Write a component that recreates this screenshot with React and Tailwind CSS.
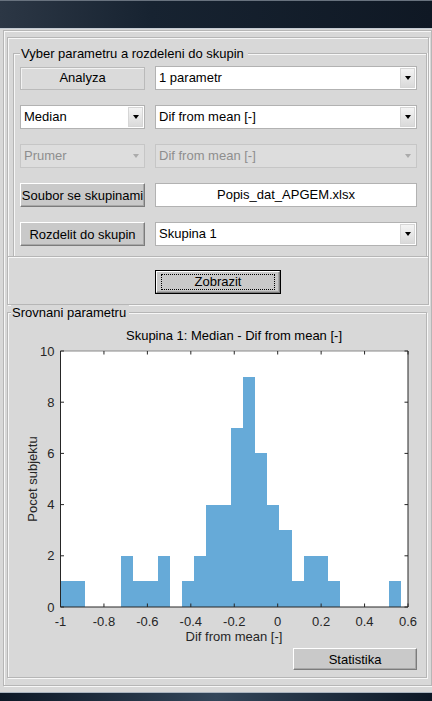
import React from 'react';

const bins = [1, 1, 0, 0, 0, 2, 1, 1, 2, 0, 1, 2, 4, 4, 7, 9, 6, 4, 3, 1, 2, 2, 1, 0, 0, 0, 0, 1];
const binWidth = 0.056;

// axes box in page pixels
const AX = { l: 60.5, r: 408, t: 351, b: 607 };
const xs = (v) => AX.l + ((v + 1) * (AX.r - AX.l)) / 1.6;
const ys = (c) => AX.b - (c * (AX.b - AX.t)) / 10;

const xTicks = [-1, -0.8, -0.6, -0.4, -0.2, 0, 0.2, 0.4, 0.6];
const yTicks = [0, 2, 4, 6, 8, 10];
const FONT = 'Liberation Sans, Arial, sans-serif';

function Select({ value, disabled }) {
    return (
        <div
            className={`flex h-[24px] flex-1 items-stretch border ${disabled
                ? 'border-[#c6c6c6] bg-[#dddddd] text-[#8e8e8e]'
                : 'border-[#b2b2b2] bg-white text-black'
                }`}
        >
            <div className="flex-1 truncate pl-[3px] leading-[22px]">{value}</div>
            <div
                className={`m-[1px] flex w-[15px] items-center justify-center border ${disabled
                    ? 'border-[#dddddd] bg-[#dddddd]'
                    : 'border-[#d6d6d6] bg-[linear-gradient(#f4f4f4,#dadada)]'
                    }`}
            >
                <span
                    className={`border-x-[3px] border-t-[4px] border-x-transparent ${disabled ? 'border-t-[#ababab]' : 'border-t-black'
                        }`}
                />
            </div>
        </div>
    );
}

function Button3D({ children, className = '' }) {
    return (
        <div
            className={`flex items-center justify-center border border-t-white border-l-white border-r-[#7c7c7c] border-b-[#7c7c7c] bg-[#c9c9c9] leading-none shadow-[inset_-1px_-1px_0_#a8a8a8] ${className}`}
        >
            {children}
        </div>
    );
}

function Histogram() {
    return (
        <svg width="418" height="325" className="block" fontFamily={FONT}>
            <g transform="translate(-8 -320)">
                <rect x={AX.l} y={AX.t} width={AX.r - AX.l} height={AX.b - AX.t} fill="#ffffff" />
                {bins.map((c, i) => {
                    if (!c) return null;
                    const x0 = xs(-1 + i * binWidth);
                    const x1 = xs(-1 + (i + 1) * binWidth);
                    return (
                        <rect
                            key={i}
                            x={x0}
                            y={ys(c)}
                            width={x1 - x0}
                            height={AX.b - ys(c)}
                            fill="#66aad8"
                            shapeRendering="crispEdges"
                        />
                    );
                })}

                {/* box */}
                <line x1={AX.l} y1={AX.t} x2={AX.r} y2={AX.t} stroke="#8a8a8a" strokeWidth="1" />
                <line x1={AX.l} y1={AX.b} x2={AX.r} y2={AX.b} stroke="#262626" strokeWidth="1" />
                <line x1={AX.l} y1={AX.t} x2={AX.l} y2={AX.b} stroke="#262626" strokeWidth="1" />
                <line x1={AX.r} y1={AX.t} x2={AX.r} y2={AX.b} stroke="#262626" strokeWidth="1" />

                {xTicks.map((v) => (
                    <g key={v}>
                        <line x1={xs(v)} y1={AX.b} x2={xs(v)} y2={AX.b - 3.5} stroke="#262626" />
                        <line x1={xs(v)} y1={AX.t} x2={xs(v)} y2={AX.t + 3.5} stroke="#262626" />
                        <text x={xs(v)} y={625.5} fontSize="13" fill="#262626" textAnchor="middle">
                            {v}
                        </text>
                    </g>
                ))}
                {yTicks.map((c) => (
                    <g key={c}>
                        <line x1={AX.l} y1={ys(c)} x2={AX.l + 3.5} y2={ys(c)} stroke="#262626" />
                        <line x1={AX.r} y1={ys(c)} x2={AX.r - 3.5} y2={ys(c)} stroke="#262626" />
                        <text x={54.5} y={ys(c) + 4.5} fontSize="13" fill="#262626" textAnchor="end">
                            {c}
                        </text>
                    </g>
                ))}

                <text x={234} y={339.5} fontSize="13" fill="#000000" textAnchor="middle">
                    Skupina 1: Median - Dif from mean [-]
                </text>
                <text x={234} y={641} fontSize="13" fill="#262626" textAnchor="middle">
                    Dif from mean [-]
                </text>
                <text
                    x={32}
                    y={479}
                    fontSize="13"
                    fill="#262626"
                    textAnchor="middle"
                    dominantBaseline="central"
                    transform="rotate(-90 32 479)"
                >
                    Pocet subjektu
                </text>
            </g>
        </svg>
    );
}

export default function App() {
    return (
        <div className="flex h-[701px] w-[432px] flex-col overflow-hidden bg-[#d8d8d8] font-['Liberation_Sans',Arial,sans-serif] text-[13px] text-black">
            {/* window title bar */}
            <div className="h-[29px] shrink-0 border-t border-b border-t-[#68727e] border-b-[#c3cad2] bg-[linear-gradient(90deg,#2c3745,#172331_35%,#0f1824)]" />

            <div className="flex-1">
                <div className="ml-[3px] mt-[1px] flex h-[656px] w-[429px] flex-col border border-[#b6b6b6] shadow-[1px_1px_0_#f7f7f7,inset_1px_1px_0_#f7f7f7]">
                    {/* parameter selection */}
                    <div className="ml-[3px] mt-[6px] w-[422px] border border-[#b6b6b6] shadow-[1px_1px_0_#f7f7f7,inset_1px_1px_0_#f7f7f7]">
                        <fieldset className="ml-[5px] mt-[8px] w-[414px] border border-b-0 border-[#b6b6b6] pb-[10px] pl-[6px] pr-[9px] pt-[5px] shadow-[1px_0_0_#f7f7f7,inset_1px_1px_0_#f7f7f7]">
                            <legend className="bg-[#d8d8d8] pl-[1px] pr-[4px] leading-[15px]">
                                Vyber parametru a rozdeleni do skupin
                            </legend>
                            <div className="flex flex-col gap-[15px]">
                                <div className="flex h-[24px] items-center gap-[10px]">
                                    <div className="flex h-[23px] w-[125px] items-center justify-center border border-[#bababa] bg-[#dadada] shadow-[inset_1px_1px_0_#f2f2f2]">
                                        Analyza
                                    </div>
                                    <Select value="1 parametr" />
                                </div>
                                <div className="flex h-[24px] items-center gap-[10px]">
                                    <div className="flex w-[125px]">
                                        <Select value="Median" />
                                    </div>
                                    <Select value="Dif from mean [-]" />
                                </div>
                                <div className="flex h-[24px] items-center gap-[10px]">
                                    <div className="flex w-[125px]">
                                        <Select value="Prumer" disabled />
                                    </div>
                                    <Select value="Dif from mean [-]" disabled />
                                </div>
                                <div className="flex h-[24px] items-center gap-[10px]">
                                    <Button3D className="h-[24px] w-[125px]">Soubor se skupinami</Button3D>
                                    <div className="flex h-[24px] flex-1 items-center justify-center border border-[#b2b2b2] bg-white">
                                        Popis_dat_APGEM.xlsx
                                    </div>
                                </div>
                                <div className="flex h-[24px] items-center gap-[10px]">
                                    <Button3D className="h-[24px] w-[125px]">Rozdelit do skupin</Button3D>
                                    <Select value="Skupina 1" />
                                </div>
                            </div>
                        </fieldset>
                    </div>

                    {/* show button */}
                    <div className="ml-[3px] flex h-[48px] w-[422px] items-center justify-center border border-t-0 border-[#b6b6b6] pt-[2px] shadow-[1px_1px_0_#f7f7f7,inset_1px_1px_0_#f7f7f7]">
                        <div className="h-[24px] w-[126px] border border-black">
                            <Button3D className="h-full w-full">
                                <span className="flex h-[16px] w-[114px] items-center justify-center border border-dotted border-black">
                                    Zobrazit
                                </span>
                            </Button3D>
                        </div>
                    </div>

                    {/* comparison */}
                    <fieldset className="ml-[3px] w-[420px] border border-[#b6b6b6] shadow-[1px_1px_0_#f7f7f7,inset_1px_1px_0_#f7f7f7]">
                        <legend className="ml-[3px] bg-[#d8d8d8] pl-[1px] pr-[3px] leading-[15px]">Srovnani parametru</legend>
                        <Histogram />
                        <div className="mt-[3px] flex justify-end pb-[7px] pr-[9px]">
                            <Button3D className="h-[22px] w-[124px]">Statistika</Button3D>
                        </div>
                    </fieldset>
                </div>
            </div>

            {/* bottom window edge */}
            <div className="h-[9px] shrink-0 border-t border-t-[#aab4bf] bg-[linear-gradient(90deg,#0d1826,#33465a_50%,#0d1826)]" />
        </div>
    );
}
